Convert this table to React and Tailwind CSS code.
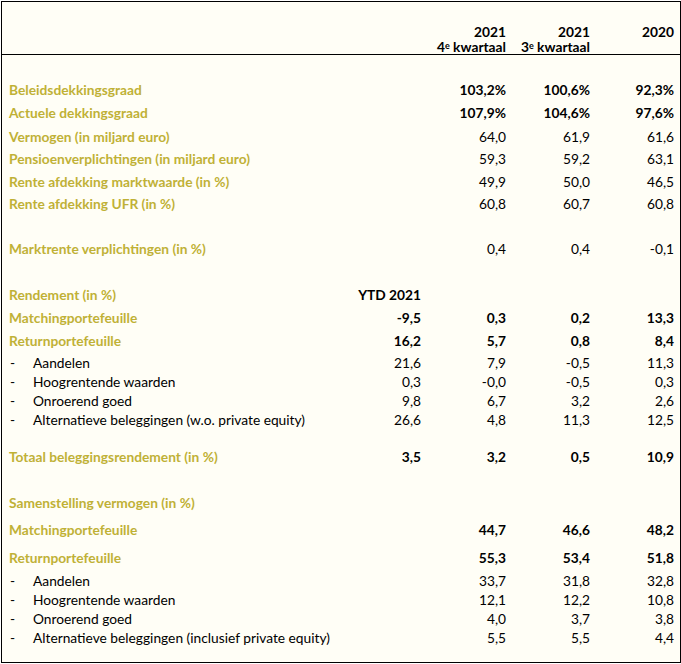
import React from "react";

const GOLD = "text-[#bfb136]";

const rows = [
  { type: "spacer", h: "h-[24px]" },
  { label: "Beleidsdekkingsgraad", v: ["", "103,2%", "100,6%", "92,3%"], bold: true, h: "h-[22px]" },
  { label: "Actuele dekkingsgraad", v: ["", "107,9%", "104,6%", "97,6%"], bold: true, h: "h-[24px]" },
  { label: "Vermogen (in miljard euro)", v: ["", "64,0", "61,9", "61,6"], h: "h-[23px]" },
  { label: "Pensioenverplichtingen (in miljard euro)", v: ["", "59,3", "59,2", "63,1"], h: "h-[22px]" },
  { label: "Rente afdekking marktwaarde (in %)", v: ["", "49,9", "50,0", "46,5"], h: "h-[23px]" },
  { label: "Rente afdekking UFR (in %)", v: ["", "60,8", "60,7", "60,8"], h: "h-[21px]" },
  { type: "spacer", h: "h-[23px]" },
  { label: "Marktrente verplichtingen (in %)", v: ["", "0,4", "0,4", "-0,1"], h: "h-[23px]" },
  { type: "spacer", h: "h-[23px]" },
  { label: "Rendement (in %)", v: ["YTD 2021", "", "", ""], bold: true, h: "h-[23px]" },
  { label: "Matchingportefeuille", v: ["-9,5", "0,3", "0,2", "13,3"], bold: true, h: "h-[23px]" },
  { label: "Returnportefeuille", v: ["16,2", "5,7", "0,8", "8,4"], bold: true, h: "h-[24px]" },
  { item: "Aandelen", v: ["21,6", "7,9", "-0,5", "11,3"], h: "h-[19px]" },
  { item: "Hoogrentende waarden", v: ["0,3", "-0,0", "-0,5", "0,3"], h: "h-[19px]" },
  { item: "Onroerend goed", v: ["9,8", "6,7", "3,2", "2,6"], h: "h-[19px]" },
  { item: "Alternatieve beleggingen (w.o. private equity)", v: ["26,6", "4,8", "11,3", "12,5"], h: "h-[19px]" },
  { type: "spacer", h: "h-[17px]" },
  { label: "Totaal beleggingsrendement (in %)", v: ["3,5", "3,2", "0,5", "10,9"], bold: true, h: "h-[22px]" },
  { type: "spacer", h: "h-[23px]" },
  { label: "Samenstelling vermogen (in %)", v: ["", "", "", ""], h: "h-[24px]" },
  { label: "Matchingportefeuille", v: ["", "44,7", "46,6", "48,2"], bold: true, h: "h-[29px]" },
  { label: "Returnportefeuille", v: ["", "55,3", "53,4", "51,8"], bold: true, h: "h-[27px]" },
  { item: "Aandelen", v: ["", "33,7", "31,8", "32,8"], h: "h-[19px]" },
  { item: "Hoogrentende waarden", v: ["", "12,1", "12,2", "10,8"], h: "h-[19px]" },
  { item: "Onroerend goed", v: ["", "4,0", "3,7", "3,8"], h: "h-[19px]" },
  { item: "Alternatieve beleggingen (inclusief private equity)", v: ["", "5,5", "5,5", "4,4"], h: "h-[19px]" },
];

const GRID = "grid grid-cols-[1fr_80px_85px_84px_84px] items-center pl-[7px] pr-[6px]";

function Row({ r }) {
  if (r.type === "spacer") return <div className={r.h} />;
  return (
    <div className={`${GRID} ${r.h}`}>
      {r.item ? (
        <div className="flex items-center text-black whitespace-nowrap">
          <span className="w-[24px] pl-[1px]">-</span>
          <span>{r.item}</span>
        </div>
      ) : (
        <div className={`${GOLD} font-bold whitespace-nowrap`}>{r.label}</div>
      )}
      {r.v.map((x, i) => (
        <div key={i} className={`text-right text-black whitespace-nowrap ${r.bold ? "font-bold" : ""}`}>
          {x}
        </div>
      ))}
    </div>
  );
}

function Quarter({ n }) {
  return (
    <div className="whitespace-nowrap leading-[14px]">
      {n}
      <span className="relative top-[-3px] text-[9px] leading-[9px]">e</span> kwartaal
    </div>
  );
}

export default function App() {
  return (
    <div className="w-[681px] h-[664px] bg-white pt-[1px] pl-[1px]">
      <div
        className="w-[680px] h-[662px] border border-black bg-[#fffef6] text-[13.75px] leading-none"
        style={{ fontFamily: "Lato, 'Open Sans', sans-serif" }}
      >
        <div className={`${GRID} h-[53px] border-b border-black items-end pb-0 font-bold text-black`}>
          <div />
          <div />
          <div className="text-right">
            <div className="leading-[16px]">2021</div>
            <Quarter n="4" />
          </div>
          <div className="text-right">
            <div className="leading-[16px]">2021</div>
            <Quarter n="3" />
          </div>
          <div className="text-right">
            <div className="leading-[16px]">2020</div>
            <div className="leading-[14px]">&nbsp;</div>
          </div>
        </div>
        {rows.map((r, i) => (
          <Row key={i} r={r} />
        ))}
      </div>
    </div>
  );
}
